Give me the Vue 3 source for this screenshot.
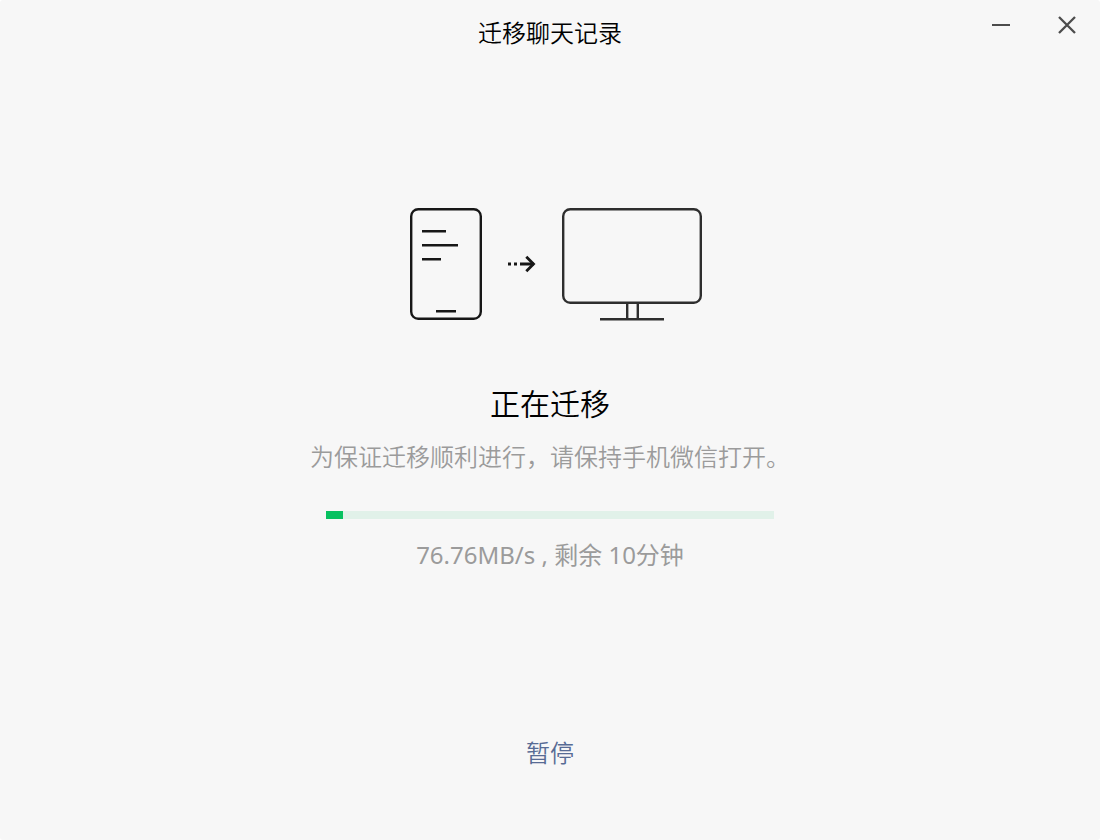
<script setup>
import { ref, computed } from 'vue'

const percent = ref(3.8)
const paused = ref(false)
const barStyle = computed(() => ({ width: `${percent.value}%` }))
</script>

<template>
  <div class="window">
    <header class="titlebar">
      <h1 class="title">迁移聊天记录</h1>
      <div class="controls">
        <button type="button" class="control" aria-label="最小化">
          <svg width="20" height="20" viewBox="0 0 20 20" aria-hidden="true">
            <path d="M1 10H19" stroke="#4c4c4c" stroke-width="2" />
          </svg>
        </button>
        <button type="button" class="control" aria-label="关闭">
          <svg width="20" height="20" viewBox="0 0 20 20" aria-hidden="true">
            <path d="M2 2L18 18M18 2L2 18" stroke="#4c4c4c" stroke-width="2.3" />
          </svg>
        </button>
      </div>
    </header>

    <main class="content">
      <svg class="art" width="304" height="114" viewBox="0 0 304 114" fill="none" aria-hidden="true">
        <g stroke="#171717" stroke-width="2.4">
          <rect x="13.2" y="1.2" width="69.6" height="109.6" rx="7" />
          <path d="M24 23.2H48M24 37.2H60M24 51.2H43M38 103.2H58" />
        </g>
        <g stroke="#171717" stroke-width="2.8">
          <path d="M110 56H113M116 56H119M122 56H136" />
          <path d="M128.3 48.8L135.5 56L128.3 63.2" />
        </g>
        <g stroke="#2e2e2e" stroke-width="2.4">
          <rect x="165.2" y="1.2" width="137.6" height="93.6" rx="7" />
          <path d="M229.2 95V110M239.8 95V110M202 111.2H266" />
        </g>
      </svg>
      <h2 class="heading">正在迁移</h2>
      <p class="hint">为保证迁移顺利进行，请保持手机微信打开。</p>
      <div class="track" role="progressbar" aria-label="正在迁移" :aria-valuenow="percent" aria-valuemin="0" aria-valuemax="100">
        <div class="bar" :style="barStyle"></div>
      </div>
      <p class="status">76.76MB/s , 剩余 10分钟</p>
    </main>

    <footer class="footer">
      <button type="button" class="pause" :aria-pressed="paused" @click="paused = !paused">暂停</button>
    </footer>
  </div>
</template>

<style>
body {
  background: #fff;
}
</style>

<style scoped>
.window {
  min-height: 100vh;
  box-sizing: border-box;
  display: flex;
  flex-direction: column;
  border-radius: 3px;
  background: #f7f7f7;
  color: #000;
  font-family: "Noto Sans", "Noto Sans CJK SC", sans-serif;
  font-size: 24px;
  font-weight: 350;
  line-height: 36px;
}

.titlebar {
  display: grid;
  grid-template-columns: 1fr auto 1fr;
  align-items: start;
}

.title {
  grid-column: 2;
  margin: 0;
  padding-top: 15px;
  font: inherit;
}

.controls {
  display: flex;
  justify-content: flex-end;
}

.control {
  display: flex;
  align-items: center;
  justify-content: center;
  width: 66px;
  height: 50px;
  padding: 0;
  border: 0;
  background: none;
}

.content {
  flex: 1;
  display: flex;
  flex-direction: column;
  align-items: center;
  padding-top: 157px;
}

.heading {
  margin: 60px 0 0;
  font-size: 30px;
  font-weight: 350;
  line-height: 44px;
}

.hint {
  margin: 13px 0 0;
  color: #9b9b9b;
}

.track {
  width: 448px;
  max-width: 90%;
  height: 8px;
  margin-top: 36px;
  background: #e1f1e9;
}

.bar {
  height: 100%;
  background: #07c160;
}

.status {
  margin: 18px 0 0;
  color: #9b9b9b;
  font-weight: 400;
}

.footer {
  display: flex;
  justify-content: center;
  padding-bottom: 69px;
}

.pause {
  padding: 0;
  border: 0;
  background: none;
  color: #576b95;
  font: inherit;
}
</style>
